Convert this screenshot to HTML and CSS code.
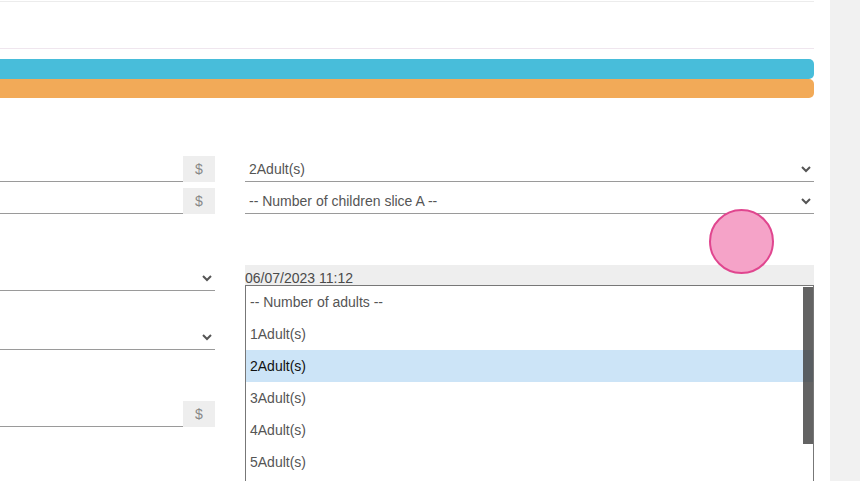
FILE: index.html
```html
<!DOCTYPE html>
<html lang="en">
<head>
    <meta charset="UTF-8">
    <title>Booking</title>
    <link rel="stylesheet" href="styles.css">
</head>
<body>
    <div class="page">
        <main class="content">
            <div class="panel"></div>

            <div class="bar bar-blue"></div>
            <div class="bar bar-orange"></div>

            <form class="booking-form">
                <div class="col col-left">
                    <div class="input-group">
                        <input type="text" class="field">
                        <span class="addon">$</span>
                    </div>
                    <div class="input-group gap-small">
                        <input type="text" class="field">
                        <span class="addon">$</span>
                    </div>
                    <select class="field select gap-large">
                        <option></option>
                    </select>
                    <select class="field select gap-mid">
                        <option></option>
                    </select>
                    <div class="input-group gap-large">
                        <input type="text" class="field">
                        <span class="addon">$</span>
                    </div>
                </div>

                <div class="col col-right">
                    <select class="field select">
                        <option>2Adult(s)</option>
                    </select>
                    <select class="field select gap-small">
                        <option>-- Number of children slice A --</option>
                    </select>
                    <div class="date-wrap gap-large">
                        <div class="date-field">06/07/2023 11:12</div>

                        <!-- open dropdown of the adults select -->
                        <div class="listbox">
                            <div class="option">-- Number of adults --</div>
                            <div class="option">1Adult(s)</div>
                            <div class="option selected">2Adult(s)</div>
                            <div class="option">3Adult(s)</div>
                            <div class="option">4Adult(s)</div>
                            <div class="option">5Adult(s)</div>
                            <div class="thumb"></div>
                        </div>
                    </div>
                </div>
            </form>

            <div class="touch"></div>
        </main>
        <aside class="side"></aside>
    </div>
</body>
</html>
```

FILE: styles.css
```css
/* Стили страницы */

:root {
    --text-color: #555555;
    --line-color: #9a9a9a;
    --addon-bg: #eeeeee;
}

html, body {
    margin: 0;
    padding: 0;
    overflow: hidden;
    height: 100%;
}

body {
    font-family: "Liberation Sans", Arial, sans-serif;
    font-size: 14px;
    color: var(--text-color);
    background-color: #ffffff;
}

.page {
    display: flex;
    height: 100%;
}

.content {
    position: relative;
    width: 814px;
    padding-right: 16px;
}

.side {
    flex: 1;
    background-color: #f1f1f1;
}

.panel {
    margin-top: 1px;
    height: 46px;
    border-top: 1px solid #ececec;
    border-bottom: 1px solid #efe6ee;
}

.bar {
    border-radius: 0 5px 5px 0;
}

.bar-blue {
    margin-top: 10px;
    height: 20px;
    background-color: #48bdda;
}

.bar-orange {
    height: 19px;
    background-color: #f2aa58;
}

.booking-form {
    display: grid;
    grid-template-columns: 215px 1fr;
    column-gap: 30px;
    margin-top: 58px;
}

.col {
    display: flex;
    flex-direction: column;
}

.field {
    box-sizing: border-box;
    height: 26px;
    margin: 0;
    padding: 0 4px;
    border: none;
    border-bottom: 1px solid var(--line-color);
    border-radius: 0;
    background: transparent;
    font-family: inherit;
    font-size: 14px;
    color: var(--text-color);
    outline: none;
}

.select {
    width: 100%;
    padding-left: 0;
}

/* Отступы между строками формы */
.gap-small {
    margin-top: 6px;
}

.gap-mid {
    margin-top: 33px;
}

.gap-large {
    margin-top: 51px;
}

.input-group {
    display: flex;
}

.input-group .field {
    flex: 1;
    min-width: 0;
}

.addon {
    width: 32px;
    height: 26px;
    display: flex;
    align-items: center;
    justify-content: center;
    background-color: var(--addon-bg);
    color: #888888;
}

.date-wrap {
    position: relative;
}

.date-field {
    height: 20px;
    line-height: 26px;
    overflow: hidden;
    background-color: var(--addon-bg);
    color: #4a4a4a;
    white-space: nowrap;
}

.listbox {
    position: absolute;
    top: 20px;
    left: 0;
    right: 0;
    padding-bottom: 20px;
    border: 1px solid #777777;
    background-color: #ffffff;
}

.option {
    height: 32px;
    line-height: 32px;
    padding-left: 4px;
    color: var(--text-color);
}

.option.selected {
    background-color: #cce4f7;
    color: #111111;
}

.thumb {
    position: absolute;
    top: 1px;
    right: 0;
    width: 10px;
    height: 157px;
    background-color: rgba(60, 60, 60, 0.8);
}

.touch {
    position: absolute;
    left: 709px;
    top: 209px;
    width: 61px;
    height: 61px;
    border: 2px solid #e0468f;
    border-radius: 50%;
    background-color: #f5a3c8;
}
```
